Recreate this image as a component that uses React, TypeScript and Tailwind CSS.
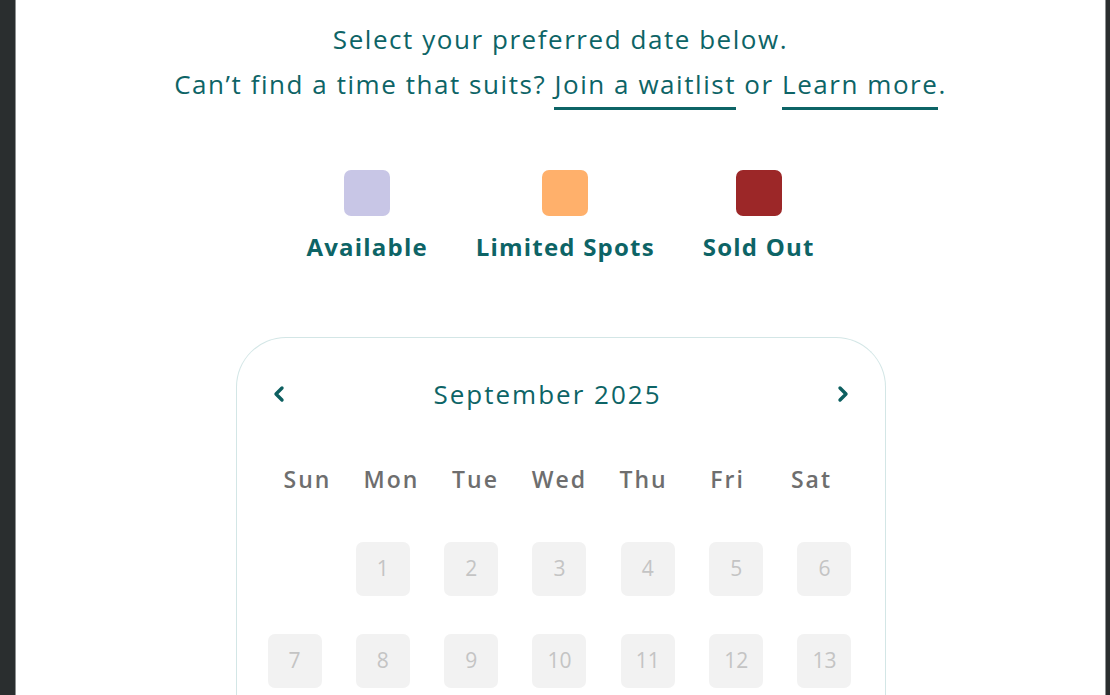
const teal = 'text-[#0d6466]'

const legend = [
  { label: 'Available', color: 'bg-[#c8c6e6]' },
  { label: 'Limited Spots', color: 'bg-[#ffb06b]' },
  { label: 'Sold Out', color: 'bg-[#9c2728]' },
]

const weekdays = ['Sun', 'Mon', 'Tue', 'Wed', 'Thu', 'Fri', 'Sat']

const days: (number | null)[] = [null, 1, 2, 3, 4, 5, 6, 7, 8, 9, 10, 11, 12, 13]

function Chevron({ dir }: { dir: 'left' | 'right' }) {
  return (
    <svg width="12" height="18" viewBox="0 0 12 18" className="text-[#0d5f60]">
      <polyline
        points={dir === 'left' ? '9,3 3,9 9,15' : '3,3 9,9 3,15'}
        fill="none"
        stroke="currentColor"
        strokeWidth="3.4"
        strokeLinecap="round"
        strokeLinejoin="round"
      />
    </svg>
  )
}

export default function App() {
  return (
    <div className="flex h-[695px] w-[1110px] overflow-hidden bg-[#2a2e2f] font-['Open_Sans',sans-serif]">
      <div className="w-[15px] shrink-0" />
      <div className="w-px shrink-0 bg-[#8e9192]" />
      <main className="flex flex-1 flex-col items-center bg-white pt-[17px]">
        <p className={`text-center text-[26px] leading-[45px] tracking-[1.55px] ${teal}`}>
          Select your preferred date below.
          <br />
          Can’t find a time that suits?{' '}
          <a className="border-b-[3px] border-[#0d6466] pb-[5px]">Join a waitlist</a> or{' '}
          <a className="border-b-[3px] border-[#0d6466] pb-[5px]">Learn more</a>.
        </p>

        <div className="mt-[63px] flex gap-[48px]">
          {legend.map((item) => (
            <div key={item.label} className="flex flex-col items-center">
              <div className={`h-[46px] w-[46px] rounded-[7px] ${item.color}`} />
              <span className={`mt-[14px] text-[24px] font-bold leading-[34px] tracking-[1.2px] ${teal}`}>
                {item.label}
              </span>
            </div>
          ))}
        </div>

        <section className="mt-[73px] w-[650px] flex-1 rounded-t-[50px] border border-b-0 border-[#d3e6e6] px-[29px] pt-[38px]">
          <div className="flex items-center justify-between px-[7px]">
            <Chevron dir="left" />
            <h2 className={`pr-[26px] text-[26px] leading-[36px] tracking-[2px] ${teal}`}>September 2025</h2>
            <Chevron dir="right" />
          </div>

          <div className="mt-[52px] grid w-[588px] grid-cols-7">
            {weekdays.map((d) => (
              <span
                key={d}
                className="text-center text-[23px] font-semibold leading-[30px] tracking-[2px] text-[#6e6e6e]"
              >
                {d}
              </span>
            ))}
          </div>

          <div className="mx-[2px] mt-[48px] grid w-[584px] grid-cols-[repeat(7,54px)] justify-between gap-y-[38px]">
            {days.map((n, i) =>
              n === null ? (
                <div key={i} />
              ) : (
                <div
                  key={i}
                  className="flex h-[54px] w-[54px] items-center justify-center rounded-[7px] bg-[#f2f2f2] text-[21px] text-[#c4c4c4]"
                >
                  {n}
                </div>
              )
            )}
          </div>
        </section>
      </main>
      <div className="w-px shrink-0 bg-[#8e9192]" />
      <div className="w-[4px] shrink-0" />
    </div>
  )
}
